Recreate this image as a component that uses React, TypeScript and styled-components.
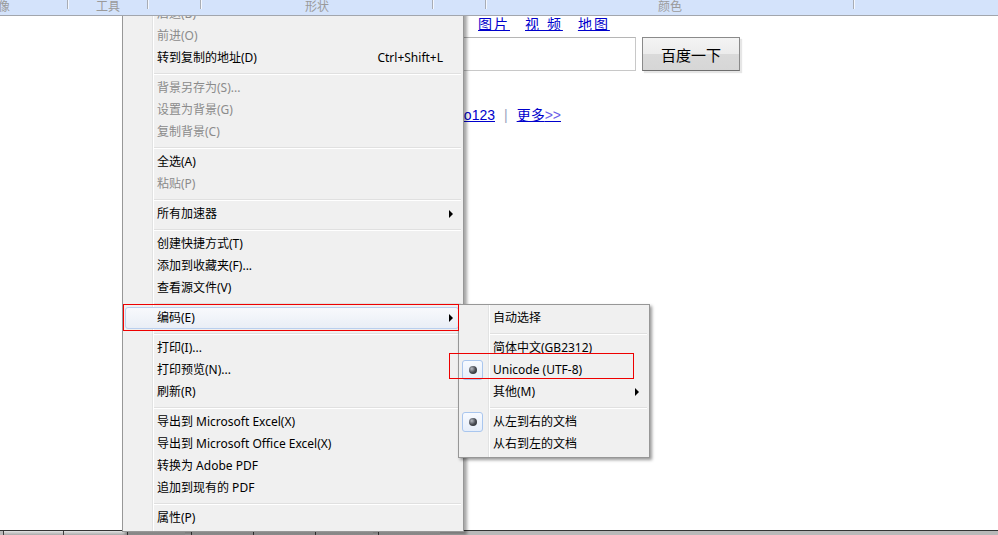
import React from 'react';
import styled, { createGlobalStyle, css } from 'styled-components';

const GlobalStyle = createGlobalStyle`
  html, body {
    margin: 0;
    padding: 0;
    background: #fff;
  }
  body {
    font-family: "Noto Sans", "Noto Sans CJK SC", sans-serif;
  }
`;

const Page = styled.div`
  position: relative;
  width: 998px;
  height: 535px;
  overflow: hidden;
  background: #fff;
  display: flex;
  flex-direction: column;
`;

/* ---------- ribbon strip at the top ---------- */

const TopBar = styled.div`
  position: relative;
  z-index: 3;
  height: 15px;
  flex-shrink: 0;
  display: flex;
  overflow: hidden;
  background: #d4e3fb;
  border-bottom: 1px solid #a2a6ad;
`;

const BarCell = styled.div<{ $w: number; $last?: boolean }>`
  position: relative;
  width: ${p => p.$w}px;
  flex-shrink: 0;
  display: flex;
  justify-content: center;

  ${p => !p.$last && css`
    &::after {
      content: '';
      position: absolute;
      right: 0;
      top: 0;
      width: 1px;
      height: 9px;
      background: #a9adb4;
      box-shadow: 1px 0 0 #f4f8ff;
    }
  `}
`;

const BarLabel = styled.span<{ $shift?: number }>`
  margin-top: -1px;
  transform: translateX(${p => p.$shift ?? 0}px);
  font-family: "Noto Sans CJK SC", sans-serif;
  font-size: 12px;
  line-height: 14px;
  color: #9a9a9a;
  white-space: nowrap;
`;

/* ---------- search page behind the menu ---------- */

const Main = styled.main`
  flex: 1;
  display: flex;
  flex-direction: column;
  padding-left: 300px;
  font-family: "Liberation Sans", "Noto Sans CJK SC", sans-serif;
`;

const NavLinks = styled.nav`
  display: flex;
  gap: 15px;
  margin-left: 178px;
  height: 16px;
  font-size: 14px;
  line-height: 16px;
`;

const NavLink = styled.a`
  color: #0000cc;
  text-decoration: underline;
  letter-spacing: 2px;
  cursor: pointer;
`;

const SearchRow = styled.div`
  display: flex;
  gap: 6px;
  margin-top: 5px;
`;

const SearchInput = styled.div`
  box-sizing: border-box;
  width: 336px;
  height: 34px;
  border: 1px solid #c8c8c8;
  border-top-color: #b5b5b5;
  background: #fff;
`;

const SearchButton = styled.button`
  box-sizing: border-box;
  width: 98px;
  height: 34px;
  padding: 0;
  border: 1px solid #8a8a8a;
  border-bottom-color: #6e6e6e;
  background: linear-gradient(#f4f4f4 0%, #ececec 50%, #dadada 51%, #d6d6d6 100%);
  box-shadow: 2px 2px 1px #e6e6e6;
  font-family: "Noto Sans CJK SC", sans-serif;
  font-size: 15px;
  color: #000;
`;

const MoreRow = styled.div`
  display: flex;
  align-items: center;
  margin-top: 36px;
  height: 16px;
  font-size: 14px;
  line-height: 16px;
`;

const HaoCell = styled.div`
  width: 195px;
  text-align: right;
`;

const PlainLink = styled.a`
  color: #0000cc;
  text-decoration: underline;
  cursor: pointer;
`;

const Chevrons = styled.span`
  color: #6a5ee8;
`;

const Divider = styled.span`
  margin: 0 9px;
  color: #9aa3c0;
`;

const Taskbar = styled.div`
  height: 4px;
  flex-shrink: 0;
  display: flex;
  padding-left: 3px;
  background: #b9b9b9;
  border-top: 1px solid #333;
`;

const TaskTab = styled.div<{ $w: number; $gap?: number }>`
  width: ${p => p.$w}px;
  margin-left: ${p => p.$gap ?? 0}px;
  border-left: 1px solid #3f3f3f;
  background: linear-gradient(#e4e4e4, #a8a8a8);
`;

/* ---------- context menus ---------- */

const Menu = styled.div`
  position: absolute;
  z-index: 2;
  box-sizing: border-box;
  padding: 2px;
  background: #f0f0f0;
  border: 1px solid #979797;
  box-shadow: 3px 3px 3px rgba(0, 0, 0, 0.35);
  font-family: "Noto Sans", "Noto Sans CJK SC", sans-serif;
  font-size: 12px;
  color: #000;

  &::before {
    content: '';
    position: absolute;
    top: 0;
    bottom: 0;
    left: 29px;
    width: 1px;
    background: #e2e3e3;
    box-shadow: 1px 0 0 #fff;
  }
`;

const ContextMenu = styled(Menu)`
  top: 0;
  left: 122px;
  width: 342px;
`;

const EncodingMenu = styled(Menu)`
  top: 304px;
  left: 458px;
  width: 192px;
  box-shadow: 2px 2px 3px rgba(0, 0, 0, 0.4);
`;

const Item = styled.div<{ $disabled?: boolean; $active?: boolean }>`
  position: relative;
  box-sizing: border-box;
  height: 22px;
  margin-right: 2px;
  display: flex;
  align-items: center;
  border: 1px solid transparent;
  border-radius: 3px;
  color: ${p => (p.$disabled ? '#8b8b8b' : '#000')};
  white-space: nowrap;

  ${p => p.$active && css`
    border-color: #b9cfee;
    background: linear-gradient(#f8f9fc, #e9eef6);
  `}
`;

const Gutter = styled.span`
  width: 31px;
  flex-shrink: 0;
  align-self: stretch;
  display: flex;
  align-items: center;
`;

const Label = styled.span`
  flex: 1;
  line-height: 20px;
`;

const Shortcut = styled.span`
  padding-right: 15px;
  line-height: 20px;
`;

const Arrow = styled.span`
  width: 0;
  height: 0;
  margin-right: 5px;
  border-left: 4px solid #000;
  border-top: 4px solid transparent;
  border-bottom: 4px solid transparent;
`;

const RadioBox = styled.span`
  box-sizing: border-box;
  width: 21px;
  height: 100%;
  display: flex;
  align-items: center;
  justify-content: center;
  border: 1px solid #a9c6ee;
  border-radius: 3px;
  background: linear-gradient(#f7faff, #e6eefa);
`;

const Dot = styled.span`
  width: 8px;
  height: 8px;
  border-radius: 50%;
  background: radial-gradient(circle at 35% 35%, #b8bcc4 0%, #4a4e56 50%, #1f2226 100%);
`;

const Separator = styled.div`
  height: 8px;
  margin-left: 28px;
  display: flex;
  flex-direction: column;
  justify-content: flex-start;

  &::before {
    content: '';
    margin-top: 4px;
    height: 1px;
    background: #e0e0e0;
    box-shadow: 0 1px 0 #fff;
  }
`;

const Annotation = styled.div`
  position: absolute;
  z-index: 4;
  box-sizing: border-box;
  border: 1px solid #ee0000;
  pointer-events: none;
`;

const EncodingMark = styled(Annotation)`
  left: 123px;
  top: 304px;
  width: 336px;
  height: 27px;
`;

const UnicodeMark = styled(Annotation)`
  left: 449px;
  top: 353px;
  width: 185px;
  height: 26px;
`;

type Entry =
  | 'sep'
  | {
      label: string;
      shortcut?: string;
      disabled?: boolean;
      submenu?: boolean;
      active?: boolean;
      radio?: boolean;
    };

const contextItems: Entry[] = [
  { label: '后退(B)', disabled: true },
  { label: '前进(O)', disabled: true },
  { label: '转到复制的地址(D)', shortcut: 'Ctrl+Shift+L' },
  'sep',
  { label: '背景另存为(S)...', disabled: true },
  { label: '设置为背景(G)', disabled: true },
  { label: '复制背景(C)', disabled: true },
  'sep',
  { label: '全选(A)' },
  { label: '粘贴(P)', disabled: true },
  'sep',
  { label: '所有加速器', submenu: true },
  'sep',
  { label: '创建快捷方式(T)' },
  { label: '添加到收藏夹(F)...' },
  { label: '查看源文件(V)' },
  'sep',
  { label: '编码(E)', submenu: true, active: true },
  'sep',
  { label: '打印(I)...' },
  { label: '打印预览(N)...' },
  { label: '刷新(R)' },
  'sep',
  { label: '导出到 Microsoft Excel(X)' },
  { label: '导出到 Microsoft Office Excel(X)' },
  { label: '转换为 Adobe PDF' },
  { label: '追加到现有的 PDF' },
  'sep',
  { label: '属性(P)' },
];

const encodingItems: Entry[] = [
  { label: '自动选择' },
  'sep',
  { label: '简体中文(GB2312)' },
  { label: 'Unicode (UTF-8)', radio: true },
  { label: '其他(M)', submenu: true },
  'sep',
  { label: '从左到右的文档', radio: true },
  { label: '从右到左的文档' },
];

function MenuEntries({ items }: { items: Entry[] }) {
  return (
    <>
      {items.map((entry, i) => {
        if (entry === 'sep') return <Separator key={i} />;
        return (
          <Item key={i} $disabled={entry.disabled} $active={entry.active}>
            <Gutter>
              {entry.radio && (
                <RadioBox>
                  <Dot />
                </RadioBox>
              )}
            </Gutter>
            <Label>{entry.label}</Label>
            {entry.shortcut && <Shortcut>{entry.shortcut}</Shortcut>}
            {entry.submenu && <Arrow />}
          </Item>
        );
      })}
    </>
  );
}

const barCells = [
  { w: 68, label: '图像', shift: -36 },
  { w: 80, label: '工具' },
  { w: 53, label: '' },
  { w: 232, label: '形状' },
  { w: 53, label: '' },
  { w: 368, label: '颜色' },
  { w: 144, label: '', last: true },
];

const taskTabs = [
  { w: 59 },
  { w: 63 },
  { w: 57 },
  { w: 61, gap: 6 },
  { w: 61 },
  { w: 57 },
  { w: 61, gap: 5 },
];

export default function App() {
  return (
    <Page>
      <GlobalStyle />
      <TopBar>
        {barCells.map((c, i) => (
          <BarCell key={i} $w={c.w} $last={c.last}>
            <BarLabel $shift={c.shift}>{c.label}</BarLabel>
          </BarCell>
        ))}
      </TopBar>

      <Main>
        <NavLinks>
          <NavLink>图片</NavLink>
          <NavLink>视 频</NavLink>
          <NavLink>地图</NavLink>
        </NavLinks>
        <SearchRow>
          <SearchInput />
          <SearchButton>百度一下</SearchButton>
        </SearchRow>
        <MoreRow>
          <HaoCell>
            <PlainLink>hao123</PlainLink>
          </HaoCell>
          <Divider>|</Divider>
          <PlainLink>
            更多<Chevrons>&gt;&gt;</Chevrons>
          </PlainLink>
        </MoreRow>
      </Main>

      <Taskbar>
        {taskTabs.map((t, i) => (
          <TaskTab key={i} $w={t.w} $gap={t.gap} />
        ))}
      </Taskbar>

      <ContextMenu>
        <MenuEntries items={contextItems} />
      </ContextMenu>
      <EncodingMenu>
        <MenuEntries items={encodingItems} />
      </EncodingMenu>

      <EncodingMark />
      <UnicodeMark />
    </Page>
  );
}
